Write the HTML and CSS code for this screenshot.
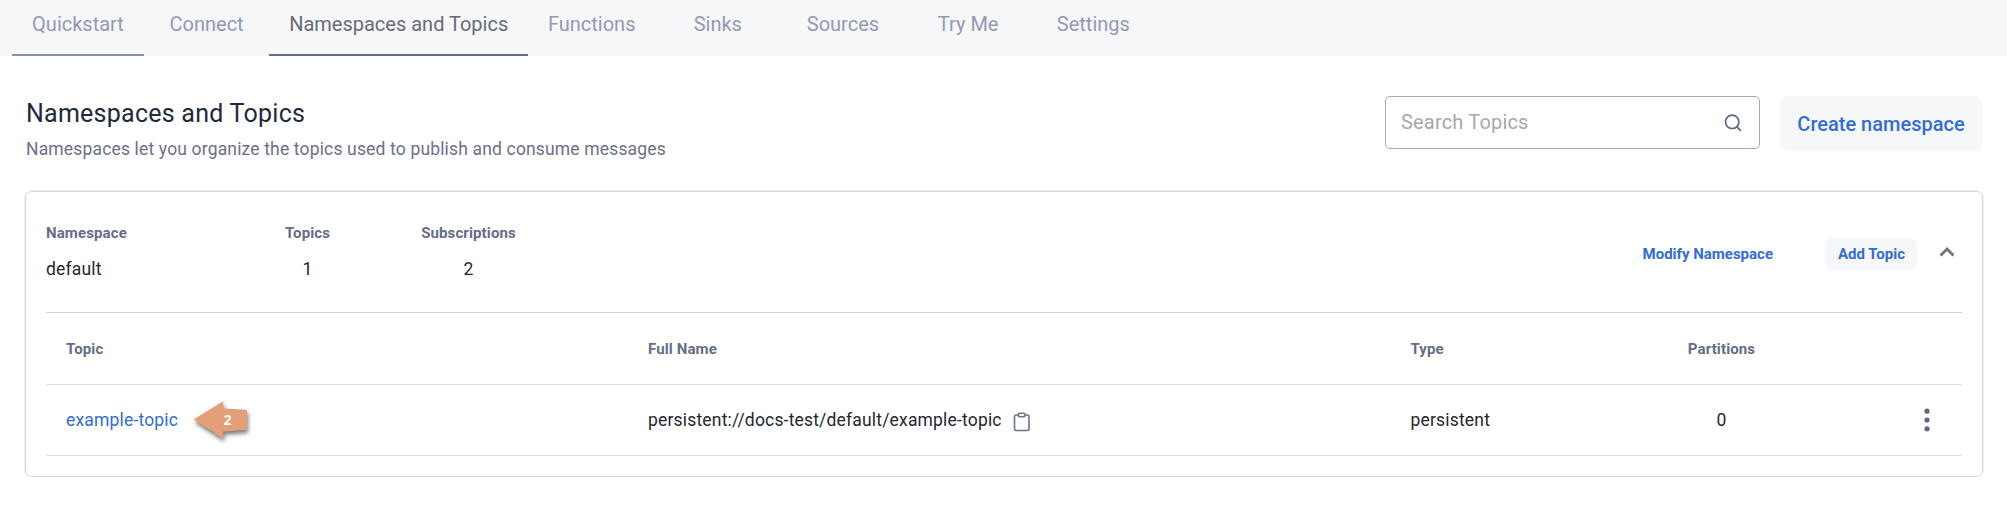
FILE: index.html
```html
<!DOCTYPE html>
<html lang="en">
<head>
<meta charset="utf-8">
<title>Namespaces and Topics</title>
<link rel="stylesheet" href="styles.css">
</head>
<body>
<nav class="tabs">
  <a class="tab tab-first">Quickstart</a>
  <a class="tab">Connect</a>
  <a class="tab tab-active">Namespaces and Topics</a>
  <a class="tab tab-wide">Functions</a>
  <a class="tab">Sinks</a>
  <a class="tab">Sources</a>
  <a class="tab">Try Me</a>
  <a class="tab">Settings</a>
</nav>
<main class="page">
  <header class="page-head">
    <div class="intro">
      <h1 class="title">Namespaces and Topics</h1>
      <p class="subtitle">Namespaces let you organize the topics used to publish and consume messages</p>
    </div>
    <div class="search">
      <span class="placeholder">Search Topics</span>
      <svg class="search-icon" width="18" height="18" viewBox="0 0 18 18"><circle cx="8.2" cy="7.8" r="6.7"/><path d="M12.8 12.6 16.8 16.8"/></svg>
    </div>
    <button class="create">Create namespace</button>
  </header>
  <section class="card">
    <div class="summary">
      <div class="stat stat-name"><span class="label">Namespace</span><span class="value">default</span></div>
      <div class="stat stat-topics"><span class="label">Topics</span><span class="value">1</span></div>
      <div class="stat stat-subs"><span class="label">Subscriptions</span><span class="value">2</span></div>
      <div class="actions">
        <a class="modify">Modify Namespace</a>
        <button class="add">Add Topic</button>
        <svg class="chevron" width="16" height="10" viewBox="0 0 16 10"><path d="M1.5 8.6 8 2.1l6.5 6.5"/></svg>
      </div>
    </div>
    <div class="row row-head">
      <span class="label">Topic</span><span class="label">Full Name</span><span class="label">Type</span><span class="label center">Partitions</span><span></span>
    </div>
    <div class="row row-data">
      <div class="topic">
        <span class="value link">example-topic</span>
        <svg class="marker" width="62" height="48" viewBox="0 0 62 48"><path d="M5.5 23.5 33.7 6 34 13 57.500 14.300V33.400L33.500 35.200 34 42Z"/><text x="38.5" y="29">2</text></svg>
      </div>
      <div class="full"><span class="value">persistent://docs-test/default/example-topic</span>
        <svg class="clip" width="18" height="20" viewBox="0 0 18 20"><path d="M5.5 3H3.2A1.7 1.7 0 0 0 1.5 4.7V16.8A1.7 1.7 0 0 0 3.2 18.5H14.3A1.7 1.7 0 0 0 16 16.8V4.7A1.7 1.7 0 0 0 14.3 3H12"/><rect x="5.5" y="1.3" width="6.5" height="3.4" rx="1"/></svg>
      </div>
      <span class="value">persistent</span>
      <span class="value center">0</span>
      <svg class="dots" width="6" height="24" viewBox="0 0 6 24"><circle cx="3" cy="3.2" r="2.6"/><circle cx="3" cy="12" r="2.6"/><circle cx="3" cy="20.8" r="2.6"/></svg>
    </div>
  </section>
</main>
</body>
</html>
```
FILE: styles.css
```css
* { box-sizing: border-box; }
body { margin: 0; background: #fff; color: #202733; font-family: Roboto, sans-serif; }
button { border: 0; padding: 0; font-family: inherit; }
.tabs { display: flex; height: 56px; padding-left: 12px; background: #f6f7f9; }
.tab { width: 125.2px; height: 56px; padding-top: 12px; text-align: center; font-size: 20px; line-height: 24px; color: #8f9bb3; white-space: nowrap; }
.tab-first { width: 132px; border-bottom: 2px solid #8592ac; }
.tab-active { width: 259px; color: #666b78; border-bottom: 2px solid #666b80; }
.tab-wide { width: 127px; }
.page { padding: 40px 24px 0 25px; }
.page-head { display: flex; height: 95px; padding-right: 1px; }
.intro { flex: 1; padding-left: 1px; }
.title { margin: 3px 0 0; font-size: 25px; line-height: 30px; font-weight: 400; letter-spacing: 0.25px; color: #202a3a; }
.subtitle { margin: 8px 0 0; font-size: 17.5px; line-height: 24px; letter-spacing: 0.16px; color: #6b7088; }
.search { display: flex; justify-content: space-between; width: 375px; height: 53px; padding: 14px 17px 0 15px; border: 1px solid #a0abc1; border-radius: 5px; }
.placeholder { font-size: 20px; line-height: 23px; letter-spacing: 0.18px; color: #a5a8ad; }
.search-icon { margin-top: 3px; fill: none; stroke: #5c6a87; stroke-width: 1.7; }
.create { width: 202px; height: 55px; margin-left: 20px; border-radius: 8px; background: #f6f7f9; color: #326dd2; font-size: 20px; font-weight: 500; }
.card { height: 286px; padding: 0 20px; border: 1px solid #d3d9e3; border-radius: 7px; box-shadow: 0 0 0 1px #eef1f5; }
.summary { display: flex; height: 121px; padding-top: 31px; border-bottom: 1px solid #cbd2e0; }
.stat { display: flex; flex-direction: column; gap: 15px; text-align: center; }
.stat-name { width: 199px; text-align: left; }
.stat-topics { width: 125px; }
.stat-subs { width: 197px; }
.label { font-size: 15px; line-height: 20px; font-weight: 700; letter-spacing: 0.12px; color: #646d89; }
.value { font-size: 17.5px; line-height: 22px; letter-spacing: 0.18px; color: #24272f; }
.actions { display: flex; align-items: flex-start; margin-left: auto; padding-right: 7px; }
.modify { margin: 21px 52px 0 0; font-size: 15px; line-height: 20px; font-weight: 700; color: #326dd2; }
.add { width: 92px; height: 32px; margin: 15px 22px 0 0; padding-left: 1px; border-radius: 7px; background: #f6f7f9; font-size: 15px; font-weight: 700; color: #326dd2; }
.chevron { margin-top: 24px; fill: none; stroke: #757575; stroke-width: 2.8; }
.row { display: grid; grid-template-columns: 582px 762.5px 249px 124px 1fr; align-items: center; height: 72px; padding-left: 20px; border-bottom: 1px solid #dcdee1; }
.row-data { height: 71px; }
.center { text-align: center; }
.topic, .full { display: flex; align-items: center; }
.link { color: #326dd2; }
.marker { margin-left: 11px; filter: drop-shadow(1px 3px 2px #0008); }
.marker path { fill: #e29f78; stroke: #e29f78; stroke-linejoin: round; }
.marker text { fill: #fff; text-anchor: middle; font: 700 14px "Open Sans", sans-serif; }
.clip { margin: 3px 0 0 11px; fill: none; stroke: #68748f; stroke-width: 1.6; }
.dots { margin-left: 140.5px; fill: #5d6984; }
```
